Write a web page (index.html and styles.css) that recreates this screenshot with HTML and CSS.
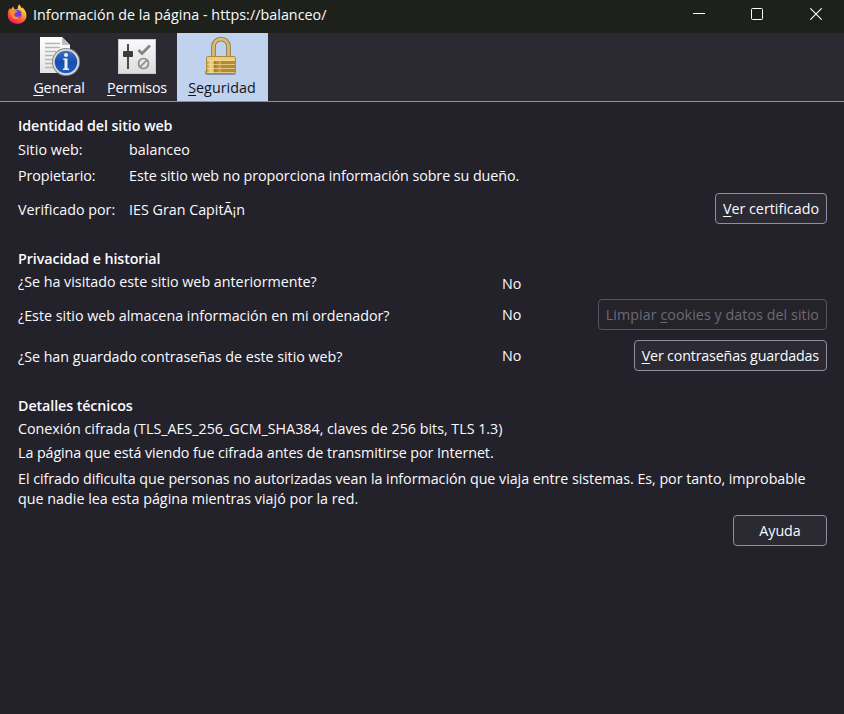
FILE: index.html
```html
<!DOCTYPE html>
<html lang="es">
<head>
<meta charset="utf-8">
<title>Información de la página</title>
<link rel="stylesheet" href="styles.css">
</head>
<body>
<header class="titlebar">
  <svg class="app-icon" width="20" height="20" viewBox="0 0 20 20" aria-hidden="true">
    <defs>
      <linearGradient id="fox" x1="0.85" y1="0" x2="0.25" y2="1"><stop offset="0" stop-color="#fff04a"/><stop offset=".35" stop-color="#ffb02e"/><stop offset=".65" stop-color="#ff5a3a"/><stop offset="1" stop-color="#f0106a"/></linearGradient>
    </defs>
    <path d="M12 .5c1.400 1 2 2.300 2.200 3.500l1.300-.6c2.500 2 4 5 4 8 0 5-4 8.300-9.300 8.300S.7 16.100.7 11c0-2.500.7-5 2.300-7l.8 1.700C4.800 4 5.500 3.200 6.500 2.500c0 1.300.4 2.200 1.300 2.800h2.700C10.700 3.500 11 2 12 .5z" fill="url(#fox)"/>
    <circle cx="10.500" cy="10" r="4" fill="#6b3fd9"/>
    <path d="M3 6.500c2-.8 3.600-.3 4.500.3l3 .2c0 1.200-1.800 1.200-2.500 1.900-.5.600 0 1.700-.8 2.100 1 2.400 4 2.600 5.300.8-.3 3.200-3.600 4.200-6 2.900C3.900 13.200 3 10.300 3 6.500z" fill="#ff8a2b"/>
  </svg>
  <span class="title">Información de la página - https://balanceo/</span>
  <div class="controls">
    <svg width="12" height="12" viewBox="0 0 12 12"><path d="M0 5.500h12" stroke="#fff"/></svg>
    <svg width="12" height="12" viewBox="0 0 12 12"><rect x=".5" y=".5" width="11" height="11" rx="1" fill="none" stroke="#fff"/></svg>
    <svg width="12" height="12" viewBox="0 0 12 12"><path d="M.3.3l11.400 11.400M11.700.3L.3 11.700" stroke="#fff" stroke-width="1.100"/></svg>
  </div>
</header>
<nav class="tabs">
  <div class="tab general">
    <svg width="42" height="42" viewBox="0 0 42 42" aria-hidden="true">
      <defs>
        <linearGradient id="paper" x1="0" y1="0" x2="0" y2="1"><stop offset="0" stop-color="#fff"/><stop offset="1" stop-color="#e4e4e4"/></linearGradient>
        <linearGradient id="blue" x1="0" y1="0" x2="0" y2="1"><stop offset="0" stop-color="#3c74c8"/><stop offset=".5" stop-color="#164fae"/><stop offset="1" stop-color="#1b5fc4"/></linearGradient>
      </defs>
      <path d="M2 1h22l8 8v28H2z" fill="url(#paper)"/>
      <path d="M24 1l8 8h-8z" fill="#bdbdbd"/>
      <path d="M7 7.500h15M7 11.500h15M7 15.500h11M7 19.500h8M7 23.500h7M7 27.500h7M7 31.500h9" stroke="#b5b5b5" stroke-width="1.300"/>
      <circle cx="28" cy="26" r="14" fill="#858585"/>
      <circle cx="28" cy="26" r="13" fill="#dedede"/>
      <circle cx="28" cy="26" r="11.300" fill="url(#blue)"/>
      <circle cx="28" cy="19" r="2" fill="#eee"/>
      <path d="M25.300 22.500h4.200v10H31V34h-6v-1.500h1.500V24h-1.200z" fill="#eee"/>
    </svg>
    <span><u>G</u>eneral</span>
  </div>
  <div class="tab permisos">
    <svg width="42" height="42" viewBox="0 0 42 42" aria-hidden="true">
      <defs><linearGradient id="panel" x1="0" y1="0" x2="0" y2="1"><stop offset="0" stop-color="#fafafa"/><stop offset="1" stop-color="#dcdcdc"/></linearGradient></defs>
      <rect x="2.500" y="3.500" width="37" height="34" fill="url(#panel)" stroke="#c9c9c9"/>
      <path d="M12 8v25" stroke="#4a4a4a" stroke-width="2"/>
      <rect x="7" y="15" width="10" height="6" rx="1" fill="#3b3b3b"/>
      <path d="M22.500 14l3.500 3.500 8-8" fill="none" stroke="#858585" stroke-width="2.700"/>
      <circle cx="27.500" cy="27.500" r="5" fill="none" stroke="#8d8d8d" stroke-width="1.700"/>
      <path d="M24 31l7-7" stroke="#8d8d8d" stroke-width="1.700"/>
    </svg>
    <span><u>P</u>ermisos</span>
  </div>
  <div class="tab seguridad selected">
    <svg width="42" height="42" viewBox="0 0 42 42" aria-hidden="true">
      <defs>
        <linearGradient id="gold" x1="0" y1="0" x2="1" y2="0"><stop offset="0" stop-color="#c99c3e"/><stop offset=".25" stop-color="#f1d98c"/><stop offset=".5" stop-color="#dcb758"/><stop offset=".52" stop-color="#a87822"/><stop offset="1" stop-color="#d4a94a"/></linearGradient>
      </defs>
      <rect x="4" y="34" width="31" height="5" rx="2.500" fill="#8390aa"/>
      <path d="M12.500 21V10.500a7.500 7.500 0 0 1 15 0V21" fill="none" stroke="#8f7440" stroke-width="4.600"/>
      <path d="M12.500 21V10.500a7.500 7.500 0 0 1 15 0V21" fill="none" stroke="#d9bb76" stroke-width="2.800"/>
      <rect x="5.500" y="20.500" width="29" height="17" rx="1.500" fill="#d9b55c" stroke="#b08a3a"/>
      <path d="M6 21h28v4H6z" fill="#e9cd80"/>
      <path d="M6 25h14v12H6z" fill="url(#gold)"/>
      <path d="M20 25h14v12H20z" fill="#b78a32"/>
      <path d="M6 24.500h28M6 28.500h28M6 32.500h28M6 36.500h28" stroke="#f2dda0" stroke-opacity=".7"/>
    </svg>
    <span><u>S</u>eguridad</span>
  </div>
</nav>
<main>
  <section class="identity">
    <h2>Identidad del sitio web</h2>
    <div class="row site"><span class="key">Sitio web:</span><span>balanceo</span></div>
    <div class="row owner"><span class="key">Propietario:</span><span>Este sitio web no proporciona información sobre su dueño.</span></div>
    <div class="row verified"><span class="key">Verificado por:</span><span>IES Gran CapitÃ¡n</span><button><u>V</u>er certificado</button></div>
  </section>
  <section class="privacy">
    <h2>Privacidad e historial</h2>
    <div class="row visited"><span class="question">¿Se ha visitado este sitio web anteriormente?</span><span class="answer">No</span></div>
    <div class="row storage"><span class="question">¿Este sitio web almacena información en mi ordenador?</span><span class="answer">No</span><button disabled>Limpiar <u>c</u>ookies y datos del sitio</button></div>
    <div class="row passwords"><span class="question">¿Se han guardado contraseñas de este sitio web?</span><span class="answer">No</span><button><u>V</u>er contraseñas guardadas</button></div>
  </section>
  <section class="technical">
    <h2>Detalles técnicos</h2>
    <p class="cipher">Conexión cifrada (TLS_AES_256_GCM_SHA384, claves de 256 bits, TLS 1.3)</p>
    <p class="sent">La página que está viendo fue cifrada antes de transmitirse por Internet.</p>
    <p class="explain">El cifrado dificulta que personas no autorizadas vean la información que viaja entre sistemas. Es, por tanto, improbable<br><span class="last">que nadie lea esta página mientras viajó por la red.</span></p>
  </section>
  <footer><button class="help">Ayuda</button></footer>
</main>
</body>
</html>
```
FILE: styles.css
```css
* { box-sizing: border-box; }
body {
  margin: 0;
  height: 714px;
  overflow: hidden;
  background: #23222b;
  color: #fbfbfe;
  font: 14.3px/20px "Open Sans", "Noto Sans", sans-serif;
  letter-spacing: -0.06px;
  white-space: nowrap;
}
u { text-decoration-thickness: 1px; text-underline-offset: 2px; }
.titlebar { display: flex; height: 33px; padding: 4px 22px 0 7px; background: #1e211b; }
.app-icon { margin-right: 6px; }
.title { padding-top: 1px; letter-spacing: 0.04px; }
.controls { display: flex; gap: 46px; margin: 4px 0 0 auto; }
.controls svg:last-child { margin-left: 1px; }
.tabs { display: flex; height: 69px; padding-left: 24px; background: #2b2a33; border-bottom: 1px solid #8f8f9d; }
.tab { display: flex; flex-direction: column; align-items: center; padding-top: 3px; letter-spacing: -0.2px; }
.tab svg { flex: none; }
.general { width: 70px; }
.permisos { width: 83px; padding-left: 3px; }
.seguridad { width: 91px; padding-right: 1px; letter-spacing: 0.05px; }
.selected { background: #c1d2ee; color: #15141a; }
main { padding: 14px 17px 0 18px; }
h2 { margin: 0; font-size: 14.3px; font-weight: 600; line-height: 20px; letter-spacing: -0.1px; }
p { margin: 0; }
.row { display: flex; height: 20px; }
.key { width: 111px; }
.question { width: 484px; }
button {
  height: 31px;
  margin: -7px 0 0 auto;
  padding: 0 7px;
  border: 1px solid #8f8f9d;
  border-radius: 4px;
  background: #2b2a33;
  color: inherit;
  font: inherit;
  letter-spacing: inherit;
}
button:disabled { border-color: #54535e; background: #24232a; color: #6b6a73; }
.site { margin-top: 4px; letter-spacing: 0.06px; }
.owner { margin-top: 6px; }
.verified { margin-top: 14px; letter-spacing: 0; }
.privacy { margin-top: 29px; }
.visited { margin-top: 3px; letter-spacing: -0.01px; }
.visited .answer { padding-top: 2px; }
.storage { margin-top: 14px; letter-spacing: 0; }
.storage button { letter-spacing: 0.05px; }
.passwords { margin-top: 21px; letter-spacing: -0.03px; }
.passwords button { letter-spacing: -0.18px; }
.storage .answer, .passwords .answer { margin-top: -1px; }
.technical { margin-top: 29px; }
.cipher { margin-top: 3px; letter-spacing: -0.01px; }
.sent { margin-top: 4px; letter-spacing: -0.08px; }
.explain { margin-top: 6px; letter-spacing: -0.04px; }
.last { letter-spacing: 0.01px; }
footer { display: flex; margin-top: 6px; }
footer button { width: 94px; margin-top: 0; }
```
